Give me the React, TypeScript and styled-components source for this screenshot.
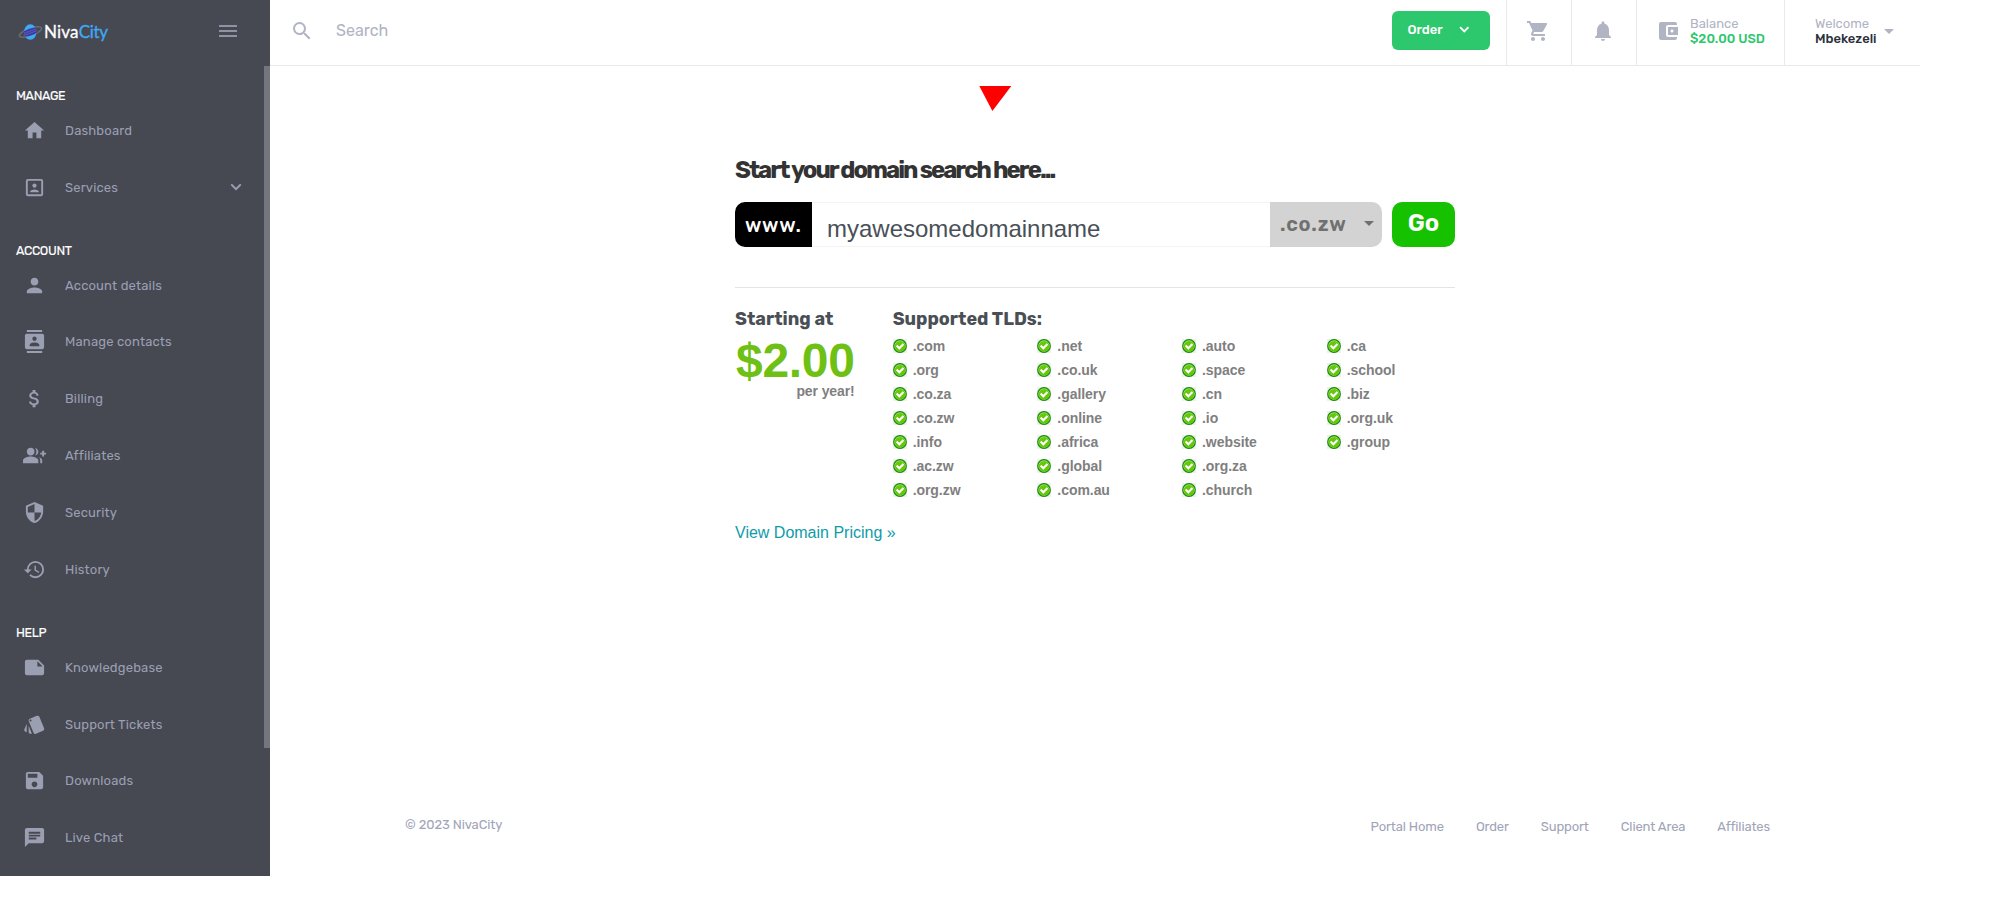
import React from 'react';
import styled, { createGlobalStyle } from 'styled-components';
import type { IconType } from 'react-icons';
import {
  MdHome, MdPortrait, MdPerson, MdContacts, MdAttachMoney, MdGroupAdd, MdSecurity, MdRestore,
  MdNote, MdStyle, MdSave, MdChat, MdMenu, MdSearch, MdShoppingCart, MdNotifications,
  MdAccountBalanceWallet,
} from 'react-icons/md';

const ui = "Rubik, Roboto, 'Liberation Sans', sans-serif";
const arial = "'Liberation Sans', Arial, sans-serif";

const GlobalStyle = createGlobalStyle`
  * { box-sizing: border-box; }
  body { margin: 0; background: #fff; font-family: ${ui}; font-size: 13px; }
  h2, h3, p, ul { margin: 0; padding: 0; }
  ul { list-style: none; }
  a { color: inherit; text-decoration: none; }
  svg { display: block; flex: none; }
`;

const Page = styled.div`
  display: flex;
  width: 1920px;
  height: 876px;
`;

/* ---------- sidebar ---------- */
const Sidebar = styled.aside`
  display: flex;
  flex-direction: column;
  flex: none;
  width: 270px;
  background: #464952;
`;
const Brand = styled.div`
  display: flex;
  align-items: center;
  justify-content: space-between;
  height: 66px;
  padding: 0 30px 4px 18px;
  color: #8f93a3;
`;
const Logo = styled.a`
  display: flex;
  align-items: center;
  padding-top: 1px;
`;
const LogoText = styled.span`
  margin-left: 1px;
  padding-top: 1px;
  font: 400 17px/20px Lato, sans-serif;
  letter-spacing: 0.2px;
  color: #fff;
  -webkit-text-stroke: 0.3px currentColor;
`;
const LogoAccent = styled.span`
  letter-spacing: -0.35px;
  color: #3fa9f5;
`;
const SideBody = styled.div`
  display: flex;
  flex: 1;
`;
const Nav = styled.nav`
  flex: 1;
`;
const ScrollThumb = styled.div`
  width: 6px;
  height: 682px;
  background: #74767f;
`;
const GroupTitle = styled.div`
  height: 41px;
  padding: 28px 0 0 16px;
  font-size: 12.5px;
  line-height: 14px;
  letter-spacing: -0.33px;
  color: #fff;
  -webkit-text-stroke: 0.15px currentColor;
`;
const NavItem = styled.li`
  display: flex;
  align-items: center;
  height: 56.85px;
  padding: 0 22px 0 23px;
  color: #9b9fb2;
`;
const NavLabel = styled.span`
  flex: 1;
  margin-left: 19px;
  padding-top: 1px;
  line-height: 16px;
  letter-spacing: 0.17px;
`;
const NavGroup = styled.section`
  &:first-child { margin-top: -5px; }
`;

/* ---------- header ---------- */
const Main = styled.main`
  display: flex;
  flex-direction: column;
  flex: 1;
`;
const Header = styled.header`
  display: flex;
  align-items: stretch;
  height: 66px;
  border-bottom: 1px solid #e9e9ec;
  color: #b0b4c3;
`;
const SearchBox = styled.div`
  display: flex;
  align-items: center;
  flex: 1;
  gap: 22px;
  padding: 0 0 4px 20px;
  font-size: 16px;
`;
const OrderButton = styled.button`
  display: flex;
  align-items: center;
  justify-content: space-between;
  width: 98px;
  height: 39px;
  margin: 11px 16px 0 0;
  padding: 0 21px 2px 15.5px;
  border: 0;
  border-radius: 6px;
  background: #2dc76d;
  color: #fff;
  font: 500 13px/16px ${ui};
`;
const HeaderCell = styled.div<{ $width: number; $pad?: number }>`
  display: flex;
  align-items: center;
  width: ${(p) => p.$width}px;
  padding: 0 0 4px ${(p) => p.$pad ?? 19}px;
  border-left: 1px solid #e9e9ec;
`;
const Stack = styled.div<{ $gap: number }>`
  margin-left: ${(p) => p.$gap}px;
  line-height: 15px;
`;
const Amount = styled.div`
  font-weight: 500;
  color: #2dc76d;
`;
const UserName = styled.div`
  font-weight: 500;
  color: #2b303b;
`;
const Caret = styled.span<{ $size: number; $color: string }>`
  border: ${(p) => p.$size}px solid transparent;
  border-top-color: ${(p) => p.$color};
  border-bottom: 0;
`;
const UserCaret = styled(Caret)`
  margin: 2px 0 0 7px;
`;

/* ---------- domain search ---------- */
const Content = styled.div`
  width: 720px;
  margin-left: 465px;
`;
const Pointer = styled.svg`
  margin: 20px 0 0 244px;
`;
const Title = styled.h2`
  margin: 45px 0 18px;
  font-size: 24px;
  font-weight: 700;
  line-height: 28px;
  letter-spacing: -2px;
  color: #333;
`;
const SearchRow = styled.div`
  display: flex;
  height: 45px;
`;
const Prefix = styled.div`
  width: 77px;
  padding-left: 10px;
  border-radius: 10px 0 0 10px;
  background: #000;
  color: #fff;
  font-size: 20px;
  font-weight: 500;
  line-height: 46px;
  letter-spacing: 0.7px;
`;
const DomainField = styled.div`
  flex: 1;
  padding: 6px 0 0 15px;
  border: 1px solid #f4f4f4;
  border-width: 1px 0;
  font: 24px/40px ${arial};
  color: #495057;
`;
const TldSelect = styled.div`
  display: flex;
  align-items: center;
  justify-content: space-between;
  width: 112px;
  padding: 0 8px 2px 10px;
  border-radius: 0 10px 10px 0;
  background: #d3d3d3;
  font: 600 20px/24px ${ui};
  letter-spacing: 0.8px;
  color: #707070;
`;
const GoButton = styled.button`
  width: 63px;
  margin-left: 10px;
  padding: 0 0 4px;
  border: 0;
  border-radius: 10px;
  background: #16c100;
  color: #fff;
  font: 600 24px/28px ${ui};
`;
const Offer = styled.section`
  display: flex;
  margin-top: 40px;
  padding-top: 20px;
  border-top: 1px solid #e4e4e4;
`;
const PriceColumn = styled.div`
  width: 138px;
  padding-right: 18px;
`;
const SubTitle = styled.h3`
  font-size: 18px;
  font-weight: 700;
  line-height: 22px;
  color: #4a4f55;
  white-space: nowrap;
`;
const Price = styled.div`
  margin: 9px 0 0 1px;
  font: 700 48px/44px ${arial};
  letter-spacing: -0.3px;
  color: #6fc014;
`;
const PriceNote = styled.div`
  font: 700 14px/16px ${arial};
  letter-spacing: -0.1px;
  text-align: right;
  color: #7f7f7f;
`;
const Divider = styled.div`
  width: 1px;
  height: 95px;
  margin-top: 3px;
  background: linear-gradient(#fff, #dcdcdc 50%, #fff);
`;
const Supported = styled.div`
  flex: 1;
  padding-left: 20px;
`;
const TldGrid = styled.ul`
  display: grid;
  grid-template: repeat(7, 24px) / repeat(4, 144.7px);
  grid-auto-flow: column;
  margin-top: 4px;
`;
const Tld = styled.li`
  display: flex;
  align-items: center;
  gap: 6px;
  padding-bottom: 1px;
  font: 700 14px/16px ${arial};
  letter-spacing: -0.05px;
  color: #7f7f7f;
`;
const PricingLink = styled.a`
  display: block;
  margin-top: 21px;
  font: 16px/20px ${arial};
  color: #0f9ba8;
`;

/* ---------- footer ---------- */
const Footer = styled.footer`
  display: flex;
  justify-content: space-between;
  height: 59px;
  margin-top: auto;
  padding: 0 150px 0 135px;
  line-height: 16px;
  letter-spacing: -0.1px;
  color: #a1a4b8;
`;
const FooterLinks = styled.div`
  display: flex;
  gap: 32px;
  padding-top: 2px;
  letter-spacing: -0.13px;
`;

type Item = { label: string; icon: IconType; more?: boolean };
const groups: { title: string; items: Item[] }[] = [
  {
    title: 'MANAGE',
    items: [
      { label: 'Dashboard', icon: MdHome },
      { label: 'Services', icon: MdPortrait, more: true },
    ],
  },
  {
    title: 'ACCOUNT',
    items: [
      { label: 'Account details', icon: MdPerson },
      { label: 'Manage contacts', icon: MdContacts },
      { label: 'Billing', icon: MdAttachMoney },
      { label: 'Affiliates', icon: MdGroupAdd },
      { label: 'Security', icon: MdSecurity },
      { label: 'History', icon: MdRestore },
    ],
  },
  {
    title: 'HELP',
    items: [
      { label: 'Knowledgebase', icon: MdNote },
      { label: 'Support Tickets', icon: MdStyle },
      { label: 'Downloads', icon: MdSave },
      { label: 'Live Chat', icon: MdChat },
    ],
  },
];

const tlds = [
  '.com', '.org', '.co.za', '.co.zw', '.info', '.ac.zw', '.org.zw',
  '.net', '.co.uk', '.gallery', '.online', '.africa', '.global', '.com.au',
  '.auto', '.space', '.cn', '.io', '.website', '.org.za', '.church',
  '.ca', '.school', '.biz', '.org.uk', '.group',
];

const Planet = () => (
  <svg width="25" height="18" viewBox="0 0 25 18">
    <ellipse cx="12.5" cy="9" rx="11.8" ry="3.6" fill="none" stroke="#6a6a72" strokeWidth="1.6" transform="rotate(-20 12.5 9)" />
    <ellipse cx="12.3" cy="9" rx="6.2" ry="7.8" fill="#3fa9f5" />
    <g transform="rotate(-20 12.5 9)">
      <path d="M6 6.2Q12.5 4.6 19 6.2V11.6Q12.5 13.4 6 11.6Z" fill="#3b3b9e" />
      <path d="M6 8H19M6 10H19" stroke="#6a62b8" strokeWidth=".7" />
    </g>
  </svg>
);

const Chevron = ({ width }: { width: number }) => (
  <svg width={width} height={width * 0.66} viewBox="0 0 12 8">
    <path d="M1.2 1.4L6 6.2L10.8 1.4" fill="none" stroke="currentColor" strokeWidth="2.1" />
  </svg>
);

const Check = () => (
  <svg width="14" height="14" viewBox="0 0 14 14">
    <rect width="14" height="14" fill="#eef1ea" />
    <circle cx="7" cy="7" r="6.9" fill="#128a0c" />
    <circle cx="7" cy="7" r="5.7" fill="#b5e67a" />
    <circle cx="7.1" cy="7.2" r="5.3" fill="#66c80a" />
    <path d="M3.6 6.6L6.3 9.2L10.5 5" fill="none" stroke="#fff" strokeWidth="2.1" />
  </svg>
);

export default function App() {
  return (
    <>
      <GlobalStyle />
      <Page>
        <Sidebar>
          <Brand>
            <Logo>
              <Planet />
              <LogoText>Niva<LogoAccent>City</LogoAccent></LogoText>
            </Logo>
            <MdMenu size={24} />
          </Brand>
          <SideBody>
            <Nav>
              {groups.map((group) => (
                <NavGroup key={group.title}>
                  <GroupTitle>{group.title}</GroupTitle>
                  <ul>
                    {group.items.map(({ label, icon: Icon, more }) => (
                      <NavItem key={label}>
                        <Icon size={23} />
                        <NavLabel>{label}</NavLabel>
                        {more && <Chevron width={12} />}
                      </NavItem>
                    ))}
                  </ul>
                </NavGroup>
              ))}
            </Nav>
            <ScrollThumb />
          </SideBody>
        </Sidebar>
        <Main>
          <Header>
            <SearchBox><MdSearch size={24} />Search</SearchBox>
            <OrderButton>Order<Chevron width={10.5} /></OrderButton>
            <HeaderCell $width={65}><MdShoppingCart size={24} /></HeaderCell>
            <HeaderCell $width={65}><MdNotifications size={24} /></HeaderCell>
            <HeaderCell $width={148}>
              <MdAccountBalanceWallet size={24} />
              <Stack $gap={10}>
                <div>Balance</div>
                <Amount>$20.00 USD</Amount>
              </Stack>
            </HeaderCell>
            <HeaderCell $width={136} $pad={30}>
              <Stack $gap={0}>
                <div>Welcome</div>
                <UserName>Mbekezeli</UserName>
              </Stack>
              <UserCaret $size={5} $color="#b0b4c3" />
            </HeaderCell>
          </Header>
          <Content>
            <Pointer width="33" height="25" viewBox="0 0 33 25">
              <path d="M.3 0H32.3L13.4 25Z" fill="#f00" />
            </Pointer>
            <Title>Start your domain search here...</Title>
            <SearchRow>
              <Prefix>www.</Prefix>
              <DomainField>myawesomedomainname</DomainField>
              <TldSelect>.co.zw<Caret $size={5} $color="#707070" /></TldSelect>
              <GoButton>Go</GoButton>
            </SearchRow>
            <Offer>
              <PriceColumn>
                <SubTitle>Starting at</SubTitle>
                <Price>$2.00</Price>
                <PriceNote>per year!</PriceNote>
              </PriceColumn>
              <Divider />
              <Supported>
                <SubTitle>Supported TLDs:</SubTitle>
                <TldGrid>
                  {tlds.map((tld) => <Tld key={tld}><Check />{tld}</Tld>)}
                </TldGrid>
              </Supported>
            </Offer>
            <PricingLink>View Domain Pricing »</PricingLink>
          </Content>
          <Footer>
            <span>© 2023 NivaCity</span>
            <FooterLinks>
              <a>Portal Home</a><a>Order</a><a>Support</a><a>Client Area</a><a>Affiliates</a>
            </FooterLinks>
          </Footer>
        </Main>
      </Page>
    </>
  );
}
